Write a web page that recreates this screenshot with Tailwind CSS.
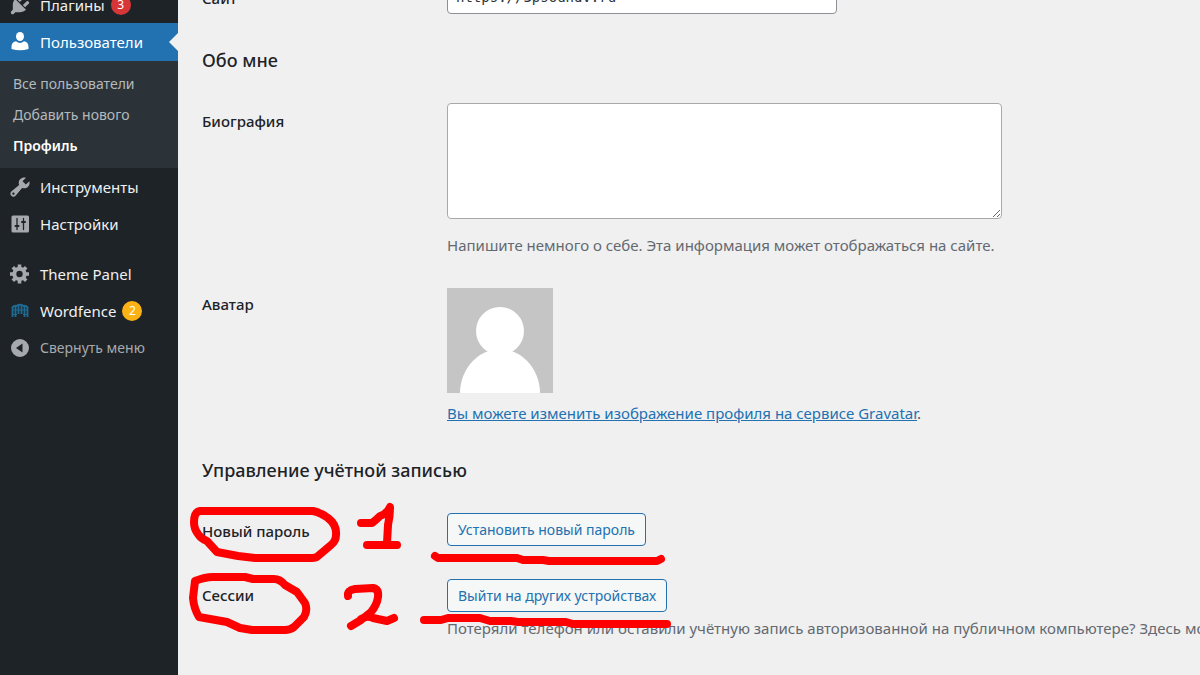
<!DOCTYPE html>
<html lang="ru">
<head>
  <meta charset="UTF-8" />
  <meta name="viewport" content="width=device-width, initial-scale=1.0"/>
  <title>Профиль</title>
  <script src="https://cdn.jsdelivr.net/npm/@tailwindcss/browser@4"></script>
</head>
<body class="relative flex min-h-screen overflow-hidden bg-[#f0f0f1] font-['Noto_Sans','Open_Sans',sans-serif] text-[15px] leading-5 text-[#1d2327]">

  <!-- Меню -->
  <nav class="w-[178px] shrink-0 bg-[#1d2327] text-[#f0f0f1]">
    <ul class="-mt-3.5">
      <li>
        <a href="#" class="flex h-[37px] items-center gap-2 pl-2">
          <svg class="size-6 fill-[#a7aaad]" viewBox="0 0 20 20"><path d="M13.11 4.36L9.87 7.6 8 5.73l3.24-3.24c.35-.34 1.05-.2 1.56.32.52.51.66 1.21.31 1.55zm-8 1.77l.91-1.12 9.01 9.01-1.19.84c-.71.71-2.63 1.16-3.82 1.16H6.14L4.9 17.26c-.59.59-1.54.59-2.12 0-.59-.58-.59-1.53 0-2.12l1.24-1.24v-3.88c0-1.13.4-3.19 1.09-3.89zm7.26 3.97l3.24-3.24c.34-.35 1.04-.21 1.55.31.52.51.66 1.21.31 1.55l-3.24 3.25z"/></svg>
          <span>Плагины</span>
          <span class="-ml-0.5 flex size-5 items-center justify-center rounded-full bg-[#d63638] text-xs text-white">3</span>
        </a>
      </li>
      <li>
        <a href="#" class="flex h-[38px] items-center gap-2 bg-[#2271b1] pl-2 text-white">
          <svg class="size-6 fill-white" viewBox="0 0 24 24">
            <ellipse cx="12" cy="6.500" rx="4" ry="4.600"/>
            <path d="M3.500 19v-2.500C3.500 13.500 5.500 11.500 8 11.300Q12 14.500 16 11.300C18.500 11.500 20.500 13.500 20.500 16.500V19Q12 21.500 3.500 19z"/>
          </svg>
          <span class="flex-1">Пользователи</span>
          <svg class="h-[18px] w-[9px] fill-[#f0f0f1]" viewBox="0 0 9 18"><path d="M9 0v18L0 9z"/></svg>
        </a>
        <ul class="bg-[#2c3338] py-[7px] text-sm text-[#b4b9be]">
          <li><a href="#" class="flex h-[31px] items-center pl-[13px]">Все пользователи</a></li>
          <li><a href="#" class="flex h-[31px] items-center pl-[13px]">Добавить нового</a></li>
          <li><a href="#" class="flex h-[31px] items-center pl-[13px] font-semibold text-white">Профиль</a></li>
        </ul>
      </li>
      <li>
        <a href="#" class="flex h-[37px] items-center gap-2 pl-2">
          <svg class="size-6 fill-[#a7aaad]" viewBox="0 0 20 20"><path d="M16.68 9.77c-1.34 1.34-3.3 1.67-4.95.99l-5.41 6.52c-.99.99-2.59.99-3.58 0s-.99-2.59 0-3.57l6.52-5.42c-.68-1.65-.35-3.61.99-4.95 1.28-1.28 3.12-1.62 4.72-1.06l-2.89 2.89 2.82 2.82 2.86-2.87c.53 1.58.18 3.39-1.08 4.65zM3.81 16.21c.4.39 1.04.39 1.43 0 .4-.4.4-1.04 0-1.43-.39-.4-1.03-.4-1.43 0-.39.39-.39 1.03 0 1.43z"/></svg>
          <span>Инструменты</span>
        </a>
      </li>
      <li>
        <a href="#" class="flex h-[37px] items-center gap-2 pl-2">
          <svg class="size-6" viewBox="0 0 24 24" fill="none" stroke="#1d2327">
            <rect x="3.500" y="3.500" width="17.500" height="17" rx="1.500" fill="#a7aaad" stroke="none"/>
            <path stroke-width="1.300" stroke-linecap="round" d="M9 6.500v11M15.500 6.500v11"/>
            <path stroke-width="2" stroke-linecap="round" d="M7.500 14h3M14 10h3"/>
          </svg>
          <span>Настройки</span>
        </a>
      </li>
      <li class="mt-[13px]">
        <a href="#" class="flex h-[37px] items-center gap-2 pl-2">
          <svg class="size-6" viewBox="0 0 24 24" fill="none" stroke="#a7aaad">
            <circle cx="11.500" cy="12" r="5.200" stroke-width="4"/>
            <path stroke-width="3.600" d="M11.500 2.500v4M11.500 17.500v4M2 12h4M17 12h4M4.800 5.300l2.800 2.800M15.400 15.900l2.800 2.800M4.800 18.700l2.800-2.800M15.400 8.100l2.800-2.800"/>
          </svg>
          <span>Theme Panel</span>
        </a>
      </li>
      <li>
        <a href="#" class="flex h-[37px] items-center gap-2 pl-2">
          <svg class="size-6" viewBox="0 0 24 24" fill="none" stroke="#1f6a93">
            <path stroke-width="2" d="M4 9Q6 6 8.500 7Q12 4.500 15.500 7Q18 6 20 9"/>
            <path stroke-width="1.800" d="M4.500 8v10M7.500 7v11M10.500 6v9M13.500 6v9M16.500 7v11M19.500 8v10"/>
            <path stroke-width="1.200" d="M4 11h16M4 15.500h5M15 15.500h5"/>
          </svg>
          <span>Wordfence</span>
          <span class="-ml-0.5 flex size-5 items-center justify-center rounded-full bg-[#fcb214] text-xs text-white">2</span>
        </a>
      </li>
      <li>
        <button type="button" class="flex h-[37px] items-center gap-2 pl-2 text-sm text-[#a7aaad]">
          <svg class="size-6 fill-[#a7aaad]" viewBox="0 0 24 24"><path fill-rule="evenodd" d="M12 3a9 9 0 1 1 0 18a9 9 0 0 1 0-18zM14.500 7.500L8 12l6.500 4.500z"/></svg>
          <span>Свернуть меню</span>
        </button>
      </li>
    </ul>
  </nav>

  <!-- Форма профиля -->
  <main class="min-w-0 flex-1 pl-6">
    <form>
      <div class="-mt-5 flex">
        <label for="url" class="w-[245px] shrink-0 pt-2 font-medium">Сайт</label>
        <input id="url" type="url" value="https://3psoundv.ru" class="h-[34px] w-[390px] rounded border border-[#8c8f94] bg-white px-2 font-['DejaVu_Sans_Mono',monospace] text-sm text-[#2c3338]" />
      </div>

      <h2 class="mt-[34px] text-lg leading-6 font-medium">Обо мне</h2>

      <div class="mt-[31px] flex">
        <label for="description" class="w-[245px] shrink-0 pt-2 font-medium">Биография</label>
        <div>
          <textarea id="description" class="block h-[116px] w-[555px] resize rounded border border-[#a7aaad] bg-white p-2"></textarea>
          <p class="mt-4 text-[#646970]">Напишите немного о себе. Эта информация может отображаться на сайте.</p>
        </div>
      </div>

      <div class="mt-[33px] flex">
        <div class="w-[245px] shrink-0 pt-1.5 font-medium">Аватар</div>
        <div>
          <svg class="h-[105px] w-[106px] bg-[#c5c5c5]" viewBox="0 0 106 105" fill="#fff">
            <circle cx="53" cy="43" r="24"/>
            <path d="M13 105C13 86 25 68 42 63h22C81 68 93 86 93 105z"/>
          </svg>
          <p class="mt-2.5 text-[#50575e]"><a href="#" class="text-[#2271b1] underline">Вы можете изменить изображение профиля на сервисе Gravatar</a>.</p>
        </div>
      </div>

      <h2 class="mt-[35px] text-lg leading-6 font-medium">Управление учётной записью</h2>

      <div class="mt-[31px] flex">
        <label for="new-password" class="w-[245px] shrink-0 pt-2 font-medium">Новый пароль</label>
        <button id="new-password" type="button" class="h-[33px] rounded border border-[#2271b1] bg-[#f6f7f7] px-2.5 text-sm text-[#2271b1]">Установить новый пароль</button>
      </div>

      <div class="mt-[33px] flex">
        <label for="sessions" class="w-[245px] shrink-0 pt-1.5 font-medium">Сессии</label>
        <div>
          <button id="sessions" type="button" class="block h-[33px] rounded border border-[#2271b1] bg-[#f6f7f7] px-2.5 text-sm text-[#2271b1]">Выйти на других устройствах</button>
          <p class="mt-1.5 whitespace-nowrap text-[#646970]">Потеряли телефон или оставили учётную запись авторизованной на публичном компьютере? Здесь можно</p>
        </div>
      </div>
    </form>
  </main>

  <!-- Пометки от руки -->
  <svg class="pointer-events-none absolute top-0 left-0 h-[675px] w-[1200px]" viewBox="0 0 1200 675" fill="none" stroke="#f00" stroke-width="8" stroke-linecap="round" stroke-linejoin="round">
    <path d="M200 511H313Q322 513 328 518Q337 525 336 535Q336 541 331 545L318 556Q316 558 312 558H255L238 556L217 552L207 541Q201 539 198 534Q194 529 194 522Q194 512 200 511z"/>
    <path d="M361 523H372Q376 520 380 516Q387 514 390 507Q390 517 388 525L387 543M367 545H397"/>
    <path d="M195 581Q205 577 213 577H245L253 579H274Q280 579 285 585L297 592L305 603Q308 610 304 617L294 627Q290 630 285 630H252L240 628L227 622L199 617Q194 609 193 598z"/>
    <path d="M348 596Q347 590 355 589L373 588Q379 589 378 597Q377 605 371 612L361 620L351 626M361 619Q367 615 373 618L387 621L394 618"/>
    <path d="M435 556L438 558H517L523 560H543L549 561H657L661 559"/>
    <path d="M424 620H441L448 618H480L490 621H511L518 622H566L573 624H667"/>
  </svg>
</body>
</html>
